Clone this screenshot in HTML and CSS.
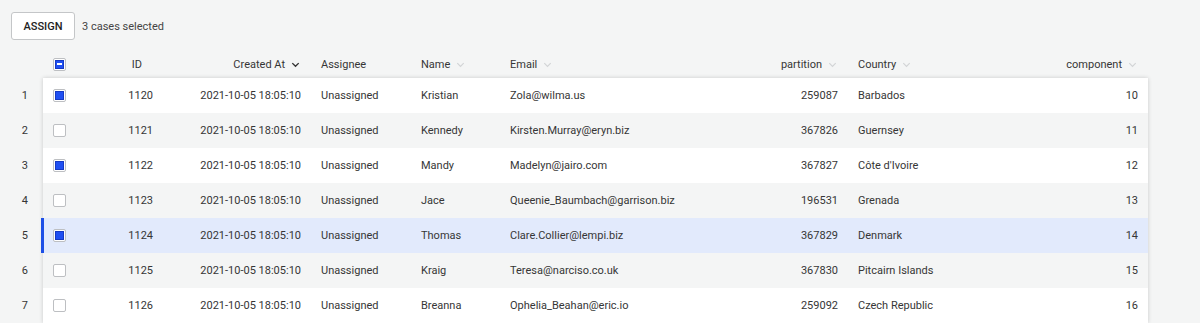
FILE: index.html
```html
<!DOCTYPE html>
<html lang="en">
<head>
    <meta charset="UTF-8">
    <title>Cases</title>
    <link rel="stylesheet" href="styles.css">
</head>
<body>
    <div class="toolbar">
        <button class="btn">ASSIGN</button>
        <span class="selected-count">3 cases selected</span>
    </div>

    <div class="table">
        <div class="table-head">
            <div class="rownum-spacer"></div>
            <div class="cols head">
                <div class="cell"><span class="check indeterminate"></span></div>
                <div class="cell right"><span>ID</span><span class="sort hidden"></span></div>
                <div class="cell right"><span>Created At</span><svg class="sort active" viewBox="0 0 12 12"><path d="M2.5 4.5 6 8l3.5-3.5"/></svg></div>
                <div class="cell"><span>Assignee</span></div>
                <div class="cell"><span>Name</span><svg class="sort" viewBox="0 0 12 12"><path d="M2.5 4.5 6 8l3.5-3.5"/></svg></div>
                <div class="cell"><span>Email</span><svg class="sort" viewBox="0 0 12 12"><path d="M2.5 4.5 6 8l3.5-3.5"/></svg></div>
                <div class="cell right"><span>partition</span><svg class="sort" viewBox="0 0 12 12"><path d="M2.5 4.5 6 8l3.5-3.5"/></svg></div>
                <div class="cell"><span>Country</span><svg class="sort" viewBox="0 0 12 12"><path d="M2.5 4.5 6 8l3.5-3.5"/></svg></div>
                <div class="cell right"><span>component</span><svg class="sort" viewBox="0 0 12 12"><path d="M2.5 4.5 6 8l3.5-3.5"/></svg></div>
            </div>
        </div>

        <div class="table-body">
            <div class="rownums">
                <div>1</div><div>2</div><div>3</div><div>4</div><div>5</div><div>6</div><div>7</div>
            </div>
            <div class="card">
                <div class="cols row">
                    <div class="cell"><span class="check checked"></span></div>
                    <div class="cell right">1120</div>
                    <div class="cell right">2021-10-05 18:05:10</div>
                    <div class="cell">Unassigned</div>
                    <div class="cell">Kristian</div>
                    <div class="cell">Zola@wilma.us</div>
                    <div class="cell right">259087</div>
                    <div class="cell">Barbados</div>
                    <div class="cell right">10</div>
                </div>
                <div class="cols row">
                    <div class="cell"><span class="check"></span></div>
                    <div class="cell right">1121</div>
                    <div class="cell right">2021-10-05 18:05:10</div>
                    <div class="cell">Unassigned</div>
                    <div class="cell">Kennedy</div>
                    <div class="cell">Kirsten.Murray@eryn.biz</div>
                    <div class="cell right">367826</div>
                    <div class="cell">Guernsey</div>
                    <div class="cell right">11</div>
                </div>
                <div class="cols row">
                    <div class="cell"><span class="check checked"></span></div>
                    <div class="cell right">1122</div>
                    <div class="cell right">2021-10-05 18:05:10</div>
                    <div class="cell">Unassigned</div>
                    <div class="cell">Mandy</div>
                    <div class="cell">Madelyn@jairo.com</div>
                    <div class="cell right">367827</div>
                    <div class="cell">Côte d'Ivoire</div>
                    <div class="cell right">12</div>
                </div>
                <div class="cols row">
                    <div class="cell"><span class="check"></span></div>
                    <div class="cell right">1123</div>
                    <div class="cell right">2021-10-05 18:05:10</div>
                    <div class="cell">Unassigned</div>
                    <div class="cell">Jace</div>
                    <div class="cell">Queenie_Baumbach@garrison.biz</div>
                    <div class="cell right">196531</div>
                    <div class="cell">Grenada</div>
                    <div class="cell right">13</div>
                </div>
                <div class="cols row active">
                    <div class="cell"><span class="check checked"></span></div>
                    <div class="cell right">1124</div>
                    <div class="cell right">2021-10-05 18:05:10</div>
                    <div class="cell">Unassigned</div>
                    <div class="cell">Thomas</div>
                    <div class="cell">Clare.Collier@lempi.biz</div>
                    <div class="cell right">367829</div>
                    <div class="cell">Denmark</div>
                    <div class="cell right">14</div>
                </div>
                <div class="cols row">
                    <div class="cell"><span class="check"></span></div>
                    <div class="cell right">1125</div>
                    <div class="cell right">2021-10-05 18:05:10</div>
                    <div class="cell">Unassigned</div>
                    <div class="cell">Kraig</div>
                    <div class="cell">Teresa@narciso.co.uk</div>
                    <div class="cell right">367830</div>
                    <div class="cell">Pitcairn Islands</div>
                    <div class="cell right">15</div>
                </div>
                <div class="cols row">
                    <div class="cell"><span class="check"></span></div>
                    <div class="cell right">1126</div>
                    <div class="cell right">2021-10-05 18:05:10</div>
                    <div class="cell">Unassigned</div>
                    <div class="cell">Breanna</div>
                    <div class="cell">Ophelia_Beahan@eric.io</div>
                    <div class="cell right">259092</div>
                    <div class="cell">Czech Republic</div>
                    <div class="cell right">16</div>
                </div>
            </div>
        </div>
    </div>
</body>
</html>
```

FILE: styles.css
```css
* {
    box-sizing: border-box;
}
body {
    margin: 0;
    background: #f4f5f5;
    font-family: Roboto, "Liberation Sans", Arial, sans-serif;
    font-size: 11px;
    color: #363636;
    overflow: hidden;
}

/* toolbar */
.toolbar {
    display: flex;
    align-items: center;
    gap: 7px;
    padding: 12px 11px 0;
}
.btn {
    height: 28px;
    width: 64px;
    padding: 0;
    background: #fff;
    border: 1px solid #c4c6c8;
    border-radius: 3px;
    font-family: inherit;
    font-size: 11px;
    font-weight: 500;
    color: #222;
}
.selected-count {
    color: #444;
}

/* table */
.table {
    margin-top: 10px;
}
.table-head {
    display: flex;
    height: 28px;
}
.rownum-spacer {
    width: 43px;
    flex: none;
}
.cols {
    display: grid;
    grid-template-columns: 47px 73px 148px 100px 89px 268px 80px 152px 148px;
    width: 1105px;
}
.cell {
    display: flex;
    align-items: center;
    padding: 0 10px;
    white-space: nowrap;
}
.cell.right {
    justify-content: flex-end;
}
.sort {
    width: 11px;
    height: 11px;
    margin-left: 5px;
    flex: none;
    fill: none;
    stroke: #d2d4d6;
    stroke-width: 1.3;
}
.sort.active {
    stroke: #333;
    stroke-width: 1.5;
}
.sort.hidden {
    display: inline-block;
    width: 6px;
    margin-left: 5px;
}

.table-body {
    display: flex;
}
.rownums {
    width: 43px;
    flex: none;
}
.rownums div {
    height: 35px;
    display: flex;
    align-items: center;
    justify-content: flex-end;
    padding-right: 15px;
}
.card {
    width: 1105px;
    box-shadow: 0 0 4px rgba(0, 0, 0, 0.18);
}
.row {
    height: 35px;
    background: #fff;
    position: relative;
}
.row:nth-child(even) {
    background: #f4f5f5;
}
.row.active {
    background: #e2eafc;
}
.row.active::before {
    content: "";
    position: absolute;
    left: -2px;
    top: 0;
    bottom: 0;
    width: 3px;
    background: #1d4fe6;
}

/* checkbox */
.check {
    display: inline-block;
    width: 13px;
    height: 13px;
    border: 1px solid #bdbfc2;
    border-radius: 2px;
    background: #fff;
    position: relative;
}
.check.checked::after,
.check.indeterminate::after {
    content: "";
    position: absolute;
    left: 1px;
    top: 1px;
    width: 9px;
    height: 9px;
    background: #1f4ff2;
    border: 1px solid #1539c4;
    box-sizing: border-box;
}
.check.indeterminate::before {
    content: "";
    position: absolute;
    left: 3px;
    top: 4px;
    width: 5px;
    height: 2px;
    background: #fff;
    z-index: 1;
}
```
